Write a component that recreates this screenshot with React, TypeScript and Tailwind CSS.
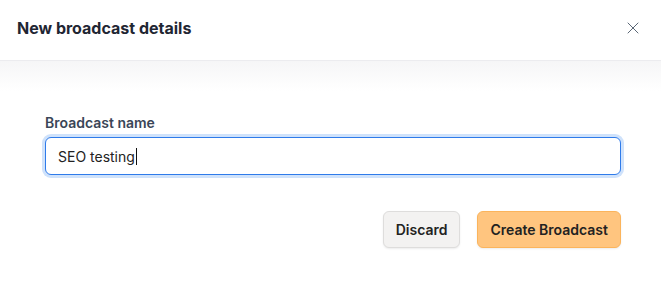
import { X } from 'lucide-react';

export default function App() {
  return (
    <div
      className="w-[661px] h-[294px] bg-white flex flex-col"
      style={{ fontFamily: 'Inter, "Noto Sans", sans-serif' }}
    >
      {/* Header */}
      <div className="h-[61px] flex items-center justify-between pl-[17px] pr-[18px] pb-[5px] border-b border-[#ececef] shrink-0">
        <h2 className="text-[16px] font-bold text-[#1f2633]">New broadcast details</h2>
        <button className="text-[#5b6776]" aria-label="Close">
          <X size={20} strokeWidth={1.2} />
        </button>
      </div>

      {/* Body */}
      <div className="flex-1 bg-gradient-to-b from-[#f6f6f7] to-white to-[30px] pl-[45px] pr-[40px] pt-[52px]">
        <label className="block text-[14px] leading-[20px] font-semibold text-[#3a4657] mb-[4px]">
          Broadcast name
        </label>
        <div className="h-[38px] rounded-[6px] border border-[#2f7bea] ring-[3px] ring-[#cfe2fb] flex items-center pl-[12px] bg-white">
          <span className="text-[14px] text-[#222]">SEO testing</span>
          <span className="w-px h-[17px] bg-[#111] ml-[1px]" />
        </div>

        <div className="flex justify-end gap-[17px] mt-[36px]">
          <button className="h-[37px] px-[12px] rounded-[6px] bg-[#f3f2f1] border border-[#dedddc] shadow-[0_1px_2px_rgba(0,0,0,0.08)] text-[14px] font-semibold text-[#222]">
            Discard
          </button>
          <button className="h-[37px] px-[12px] rounded-[6px] bg-[#ffc57f] border border-[#fbb45c] shadow-[0_1px_2px_rgba(0,0,0,0.08)] text-[14px] font-semibold text-[#222]">
            Create Broadcast
          </button>
        </div>
      </div>
    </div>
  );
}
